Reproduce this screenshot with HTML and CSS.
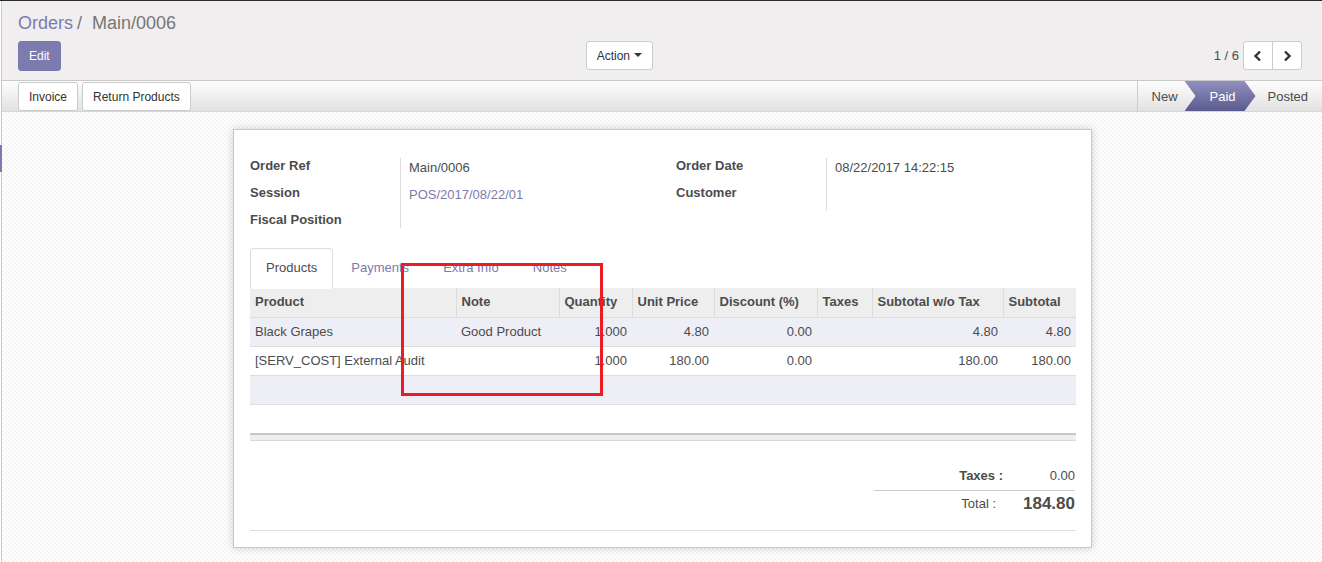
FILE: index.html
```html
<!DOCTYPE html>
<html>
<head>
<meta charset="utf-8">
<link rel="stylesheet" href="styles.css">
</head>
<body>
<div class="app">
  <div class="side-mark"></div>
  <div class="main">
    <div class="cp">
      <div class="crumbs"><span class="crumb-link">Orders</span><span class="crumb-sep">/</span><span class="crumb-cur">Main/0006</span></div>
      <div class="cp-row">
        <div class="cp-left">
          <button class="btn btn-primary">Edit</button>
          <button class="btn btn-default">Action <span class="caret"></span></button>
        </div>
        <div class="cp-right">
          <span class="pager-val">1 / 6</span>
          <div class="pager-btns">
            <button class="btn btn-default pager-btn"><svg width="10" height="12" viewBox="0 0 10 12"><path d="M7 1.5 L2.5 6 L7 10.5" fill="none" stroke="#333" stroke-width="2.4"/></svg></button>
            <button class="btn btn-default pager-btn"><svg width="10" height="12" viewBox="0 0 10 12"><path d="M3 1.5 L7.5 6 L3 10.5" fill="none" stroke="#333" stroke-width="2.4"/></svg></button>
          </div>
        </div>
      </div>
    </div>
    <div class="statusbar">
      <div class="sb-buttons">
        <button class="btn btn-default btn-sb">Invoice</button>
        <button class="btn btn-default btn-sb">Return Products</button>
      </div>
      <div class="sb-status">
        <span class="st st-new">New</span>
        <span class="st st-paid">Paid</span>
        <span class="st st-posted">Posted</span>
      </div>
    </div>
    <div class="view">
      <div class="sheet">
        <div class="groups">
          <div class="group g-left">
            <div class="lbl r1">Order Ref</div>
            <div class="lbl r2">Session</div>
            <div class="lbl r3">Fiscal Position</div>
            <div class="vals">
              <div class="val">Main/0006</div>
              <div class="val link">POS/2017/08/22/01</div>
            </div>
          </div>
          <div class="group g-right">
            <div class="lbl r1">Order Date</div>
            <div class="lbl r2">Customer</div>
            <div class="vals">
              <div class="val">08/22/2017 14:22:15</div>
            </div>
          </div>
        </div>
        <div class="tabs">
          <span class="tab active">Products</span>
          <span class="tab">Payments</span>
          <span class="tab">Extra Info</span>
          <span class="tab">Notes</span>
        </div>
        <table class="lines">
          <colgroup>
            <col style="width:206px"><col style="width:103px"><col style="width:73px"><col style="width:82px"><col style="width:103px"><col style="width:55px"><col style="width:131px"><col style="width:73px">
          </colgroup>
          <thead>
            <tr><th>Product</th><th>Note</th><th>Quantity</th><th>Unit Price</th><th>Discount (%)</th><th>Taxes</th><th>Subtotal w/o Tax</th><th>Subtotal</th></tr>
          </thead>
          <tbody>
            <tr class="odd"><td>Black Grapes</td><td>Good Product</td><td class="num">1.000</td><td class="num">4.80</td><td class="num">0.00</td><td></td><td class="num">4.80</td><td class="num">4.80</td></tr>
            <tr><td>[SERV_COST] External Audit</td><td></td><td class="num">1.000</td><td class="num">180.00</td><td class="num">0.00</td><td></td><td class="num">180.00</td><td class="num">180.00</td></tr>
            <tr class="odd empty"><td></td><td></td><td></td><td></td><td></td><td></td><td></td><td></td></tr>
          </tbody>
        </table>
        <div class="sep-bar"></div>
        <div class="totals">
          <div class="t-row t-taxes"><span class="t-lbl">Taxes :</span><span class="t-val">0.00</span></div>
          <div class="t-row t-total"><span class="t-lbl">Total :</span><span class="t-val">184.80</span></div>
        </div>
        <div class="bottom-line"></div>
      </div>
      <div class="highlight"></div>
    </div>
  </div>
</div>
</body>
</html>
```

FILE: styles.css
```css
* { box-sizing: border-box; }
html, body { margin: 0; padding: 0; background: #fff; }
body {
  font-family: "Liberation Sans", Arial, sans-serif;
  font-size: 13px;
  color: #4c4c4c;
  width: 1322px;
  height: 562px;
  overflow: hidden;
}
.app {
  position: relative;
  border-top: 1px solid #2a2a2a;
  height: 562px;
}
.side-mark {
  position: absolute;
  left: 0;
  top: 144px;
  width: 2px;
  height: 27px;
  background: #7c7bad;
}
.main {
  margin-left: 1px;
  border-left: 1px solid #c9c9c9;
  height: 100%;
  display: flex;
  flex-direction: column;
}
.btn {
  font-family: inherit;
  font-size: 12px;
  border-radius: 3px;
  cursor: pointer;
  line-height: 18px;
}
.btn-primary {
  background: #7c7bad;
  border: 1px solid #7c7bad;
  color: #fff;
  padding: 5px 10px;
  height: 30px;
}
.btn-default {
  background: #fff;
  border: 1px solid #ccc;
  color: #333;
  padding: 4px 10px;
  height: 29px;
}
/* control panel */
.cp {
  background: #f0eeee;
  padding: 11px 0 9px 16px;
  height: 80px;
  border-bottom: 1px solid #c9c9c9;
}
.crumbs {
  font-size: 18px;
  line-height: 22px;
  height: 29px;
}
.crumb-link { color: #7c7bad; }
.crumb-sep { color: #777; margin: 0 10px 0 4px; }
.crumb-cur { color: #777; }
.cp-row {
  display: flex;
  align-items: flex-start;
}
.cp-left {
  width: 635px;
  display: flex;
  justify-content: space-between;
  align-items: flex-start;
}
.cp-left .btn-default { width: 67px; padding: 4px 0; text-align: center; }
.caret {
  display: inline-block;
  width: 0; height: 0;
  border-left: 4px solid transparent;
  border-right: 4px solid transparent;
  border-top: 4px solid #333;
  vertical-align: middle;
  margin-left: 1px;
  margin-top: -2px;
}
.cp-right {
  margin-left: auto;
  margin-right: 20px;
  display: flex;
  align-items: center;
  height: 29px;
}
.pager-val { color: #4c4c4c; margin-right: 4px; font-size: 13px; }
.pager-btns { display: flex; }
.pager-btn {
  width: 30px;
  padding: 0;
  display: flex;
  align-items: center;
  justify-content: center;
}
.pager-btn + .pager-btn { margin-left: -1px; }
.pager-btns .pager-btn:first-child { border-radius: 3px 0 0 3px; }
.pager-btns .pager-btn:last-child { border-radius: 0 3px 3px 0; }
/* status bar */
.statusbar {
  height: 31px;
  display: flex;
  align-items: stretch;
  background: linear-gradient(#fdfdfd, #e2e2e2);
  border-bottom: 1px solid #d6d6d6;
}
.sb-buttons {
  display: flex;
  gap: 4px;
  padding-left: 16px;
  padding-top: 1px;
}
.btn-sb { height: 29px; padding: 4px 10px; font-size: 12px; }
.sb-status {
  margin-left: auto;
  display: flex;
  align-items: stretch;
  border-left: 1px solid #ccc;
}
.st {
  display: flex;
  align-items: center;
  font-size: 13px;
  color: #4c4c4c;
}
.st-new { width: 47px; padding-left: 14px; }
.st-paid {
  width: 71px;
  padding-left: 25px;
  color: #fff;
  background: linear-gradient(#9190c0, #5b5a8e);
  clip-path: polygon(0 0, 60px 0, 71px 50%, 60px 100%, 0 100%, 11px 50%);
}
.st-posted { margin-left: -11px; padding-left: 23px; padding-right: 14px; }
/* view */
.view {
  position: relative;
  flex: 1;
  background-color: #fff;
  background-image: conic-gradient(#f5f5f5 25%, #fff 0 50%, #f5f5f5 0 75%, #fff 0);
  background-size: 4px 4px;
  padding-top: 17px;
}
.sheet {
  width: 859px;
  margin-left: 231px;
  background: #fff;
  border: 1px solid #c8c8c8;
  box-shadow: 0 0 8px rgba(0,0,0,0.18);
  padding: 28px 15px 16px 16px;
}
.groups { display: flex; }
.group {
  display: grid;
  grid-template-columns: 150px 1fr;
}
.g-left { width: 426px; flex: none; grid-template-rows: 27px 27px 16px; }
.g-right { flex: 1; grid-template-rows: 27px 26px; }
.lbl {
  grid-column: 1;
  font-weight: bold;
  line-height: 16px;
  color: #4c4c4c;
}
.r1 { grid-row: 1; }
.r2 { grid-row: 2; }
.r3 { grid-row: 3; }
.vals {
  grid-column: 2;
  grid-row: 1 / -1;
  border-left: 1px solid #ddd;
  padding-left: 8px;
  padding-top: 2px;
}
.val { line-height: 16px; height: 27px; color: #4c4c4c; }
.val.link { color: #7c7bad; }
/* tabs */
.tabs {
  display: flex;
  margin-top: 20px;
  height: 40px;
}
.tab {
  padding: 9px 15px 11px;
  line-height: 19px;
  border: 1px solid transparent;
  border-bottom: none;
  border-radius: 4px 4px 0 0;
  margin-right: 2px;
  color: #7c7bad;
}
.tab.active {
  color: #4c4c4c;
  border-color: #ddd;
  background: #fff;
  height: 41px;
  position: relative;
}
/* table */
.lines {
  width: 826px;
  border-collapse: collapse;
  table-layout: fixed;
}
.lines th {
  background: #eee;
  text-align: left;
  font-weight: bold;
  height: 29px;
  padding: 0 5px 1px;
  border-left: 1px solid #ddd;
  border-bottom: 1px solid #ddd;
  white-space: nowrap;
  overflow: hidden;
}
.lines th:first-child { border-left: none; }
.lines td {
  height: 29px;
  padding: 0 5px;
  border-bottom: 1px solid #ddd;
  white-space: nowrap;
  overflow: hidden;
}
.lines td.num { text-align: right; }
.lines tr.odd td { background: #eeeef6; }
.sep-bar {
  height: 8px;
  margin-top: 28px;
  border-top: 2px solid #c8c8c8;
  background: #eee;
  border-bottom: 1px solid #d8d8d8;
}
.totals {
  width: 202px;
  margin-left: auto;
  margin-top: 26px;
  padding-right: 1px;
}
.t-row {
  display: flex;
  justify-content: flex-end;
  align-items: center;
}
.t-taxes { height: 17px; }
.t-taxes .t-lbl { font-weight: bold; padding-right: 34px; }
.t-taxes .t-val { width: 38px; text-align: right; }
.t-total {
  margin-top: 6px;
  border-top: 1px solid #ccc;
  height: 26px;
  padding-top: 1px;
}
.t-total .t-lbl { padding-right: 27px; }
.t-total .t-val { font-weight: bold; font-size: 17px; }
.bottom-line {
  margin-top: 14px;
  border-top: 1px solid #ddd;
}
.highlight {
  position: absolute;
  left: 399px;
  top: 151px;
  width: 202px;
  height: 133px;
  border: 3px solid #ec1c24;
  pointer-events: none;
}
```
